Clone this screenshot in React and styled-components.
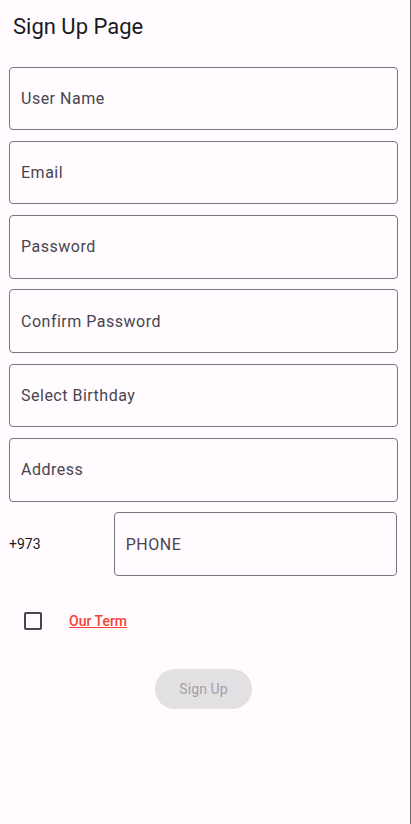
import styled, { createGlobalStyle } from "styled-components"

const GlobalStyle = createGlobalStyle`
  html, body {
    margin: 0;
    padding: 0;
    background: #fffbfe;
    font-family: Roboto, "Liberation Sans", sans-serif;
  }
  * { box-sizing: border-box; }
`

const Page = styled.div`
  width: 411px;
  min-height: 824px;
  border-right: 1px solid #6b6a6d;
  background: #fffbfe;
  padding: 12.5px 13px 0 9px;
  display: flex;
  flex-direction: column;
`

const Title = styled.h1`
  margin: 0 0 0 4px;
  font-size: 22px;
  line-height: 28px;
  font-weight: 400;
  color: #1c1b1f;
`

const Form = styled.div`
  margin-top: 26px;
  display: flex;
  flex-direction: column;
  gap: 10.83px;
`

const Field = styled.div`
  width: ${props => props.width || "389px"};
  height: 63.5px;
  border: 1px solid #79747e;
  border-radius: 4px;
  display: flex;
  align-items: center;
  padding-left: 11px;
  font-size: 16px;
  letter-spacing: 0.5px;
  color: #49454f;
`

const PhoneRow = styled.div`
  display: flex;
  align-items: center;
`

const Prefix = styled.span`
  width: 105px;
  font-size: 14px;
  color: #1c1b1f;
`

const TermRow = styled.div`
  margin-top: 21px;
  height: 48px;
  display: flex;
  align-items: center;
`

const CheckTarget = styled.div`
  width: 48px;
  height: 48px;
  display: flex;
  align-items: center;
  justify-content: center;
`

const Box = styled.div`
  width: 18px;
  height: 18px;
  border: 2px solid #49454f;
  border-radius: 2px;
`

const TermLink = styled.a`
  margin-left: 12px;
  font-size: 14px;
  font-weight: 500;
  color: #f44336;
  text-decoration: underline;
  cursor: pointer;
`

const ButtonRow = styled.div`
  margin-top: 24.5px;
  width: 389px;
  display: flex;
  justify-content: center;
`

const SignUpButton = styled.button`
  width: 97px;
  height: 40px;
  border: none;
  border-radius: 20px;
  background: #e3e0e4;
  color: #a3a0a5;
  font-family: Roboto, "Liberation Sans", sans-serif;
  font-size: 14px;
  letter-spacing: 0.1px;
`

const fields = ["User Name", "Email", "Password", "Confirm Password", "Select Birthday", "Address"]

const App = () => {
  return (
    <>
      <GlobalStyle />
      <Page>
        <Title>Sign Up Page</Title>
        <Form>
          {fields.map(f => (
            <Field key={f}>{f}</Field>
          ))}
          <PhoneRow>
            <Prefix>+973</Prefix>
            <Field width="284px">PHONE</Field>
          </PhoneRow>
        </Form>
        <TermRow>
          <CheckTarget>
            <Box />
          </CheckTarget>
          <TermLink>Our Term</TermLink>
        </TermRow>
        <ButtonRow>
          <SignUpButton disabled>Sign Up</SignUpButton>
        </ButtonRow>
      </Page>
    </>
  )
}

export default App
